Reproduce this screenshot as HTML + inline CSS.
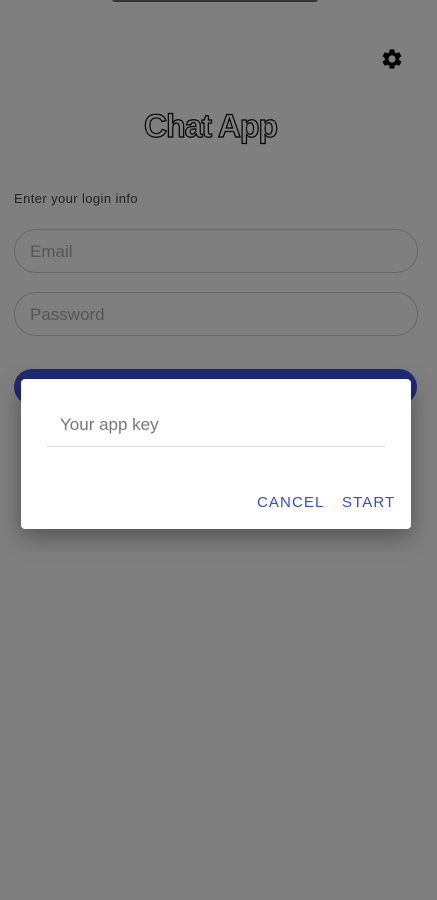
<!DOCTYPE html>
<html><head><meta charset="utf-8"><style>
html,body{margin:0;padding:0;}
body{width:437px;height:900px;background:#7f7f7f;position:relative;overflow:hidden;font-family:"Liberation Sans",sans-serif;}
.notch{position:absolute;left:112px;top:-4px;width:206px;height:6px;background:#333;border-radius:3px;}
.field{position:absolute;left:14px;height:42px;border:1.5px solid #666;border-radius:22px;color:#555;font-size:17px;line-height:44px;padding-left:15px;width:387px;}
.btn{position:absolute;left:14px;top:369px;width:403px;height:36px;background:#1e2a78;border-radius:18px;}
.dlg{position:absolute;left:21px;top:379px;width:390px;height:150px;background:#fff;border-radius:4px;box-shadow:0 8px 24px rgba(0,0,0,.35);}
.inp{position:absolute;left:26px;top:36px;width:338px;height:32px;border-bottom:1.5px solid #ddd;color:#777;font-size:17px;padding-left:13px;box-sizing:border-box;}
.act{position:absolute;top:115px;color:#2c4de8;font-size:15px;letter-spacing:1.1px;}
</style></head><body>
<div class="notch"></div>
<svg style="position:absolute;left:380px;top:47px" width="24" height="24" viewBox="0 0 24 24"><path fill="#000" d="M19.14 12.94c.04-.3.06-.61.06-.94 0-.32-.02-.64-.07-.94l2.03-1.58a.49.49 0 0 0 .12-.61l-1.920-3.32a.49.49 0 0 0-.59-.22l-2.39.96c-.5-.38-1.03-.7-1.62-.94l-.36-2.54a.48.48 0 0 0-.48-.41h-3.84c-.24 0-.43.17-.47.41l-.36 2.54c-.59.24-1.130.57-1.62.94l-2.39-.96a.48.48 0 0 0-.59.22L2.740 8.87c-.12.21-.08.47.12.61l2.03 1.58c-.05.3-.09.63-.09.94s.02.64.07.94l-2.03 1.58a.49.49 0 0 0-.12.61l1.92 3.32c.12.22.37.29.59.22l2.39-.96c.5.38 1.03.7 1.62.94l.36 2.54c.05.24.24.41.48.41h3.84c.24 0 .44-.17.47-.41l.36-2.54c.59-.24 1.13-.56 1.62-.94l2.39.96c.22.08.47 0 .59-.22l1.92-3.32c.12-.22.07-.47-.12-.61l-2.01-1.58zM12 15.6A3.6 3.6 0 1 1 12 8.4a3.6 3.6 0 0 1 0 7.2z"/></svg>
<div style="position:absolute;left:144px;top:108px;font-size:32px;font-weight:bold;color:#7f7f7f;-webkit-text-stroke:1.2px #000;letter-spacing:-1px">Chat App</div>
<div style="position:absolute;left:14px;top:191px;font-size:13px;color:#222;letter-spacing:.4px">Enter your login info</div>
<div class="field" style="top:229px">Email</div>
<div class="field" style="top:292px">Password</div>
<div class="btn"></div>
<div class="dlg">
<div class="inp">Your app key</div>
<div class="act" style="left:236px">CANCEL</div>
<div class="act" style="left:321px">START</div>
</div>
</body></html>
